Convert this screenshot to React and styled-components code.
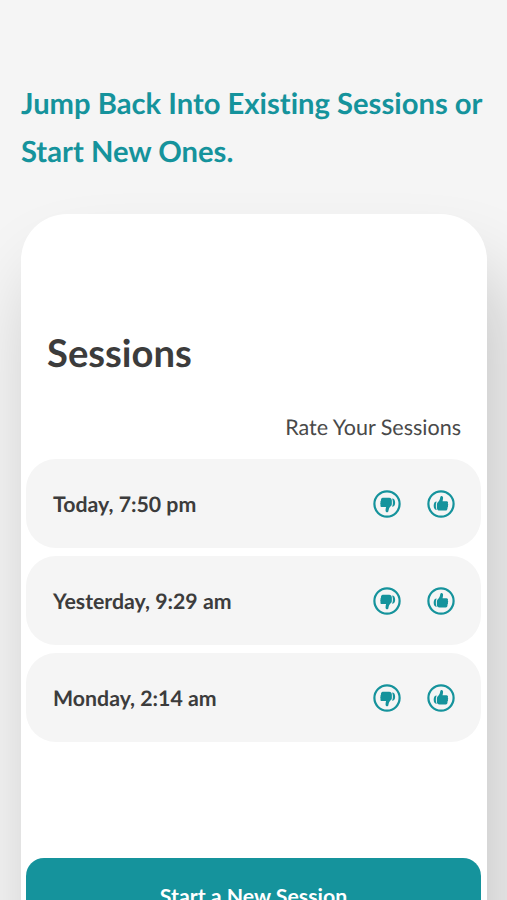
import React from "react";
import styled, { createGlobalStyle } from "styled-components";

const sessions = ["Today, 7:50 pm", "Yesterday, 9:29 am", "Monday, 2:14 am"];

const ThumbIcon = ({ down }) => (
  <svg width="28" height="28" viewBox="0 0 28 28" aria-hidden="true">
    <circle cx="14" cy="14" r="12.6" fill="none" stroke="#15939c" strokeWidth="2.2" />
    {down ? (
      <path
        transform="translate(-.2 -.7) scale(1.03 1.13)"
        d="M9.7 7.400h6.200c1.600 0 2.600 1 2.600 2.500v2.800c0 1.200-.6 1.900-1.400 2.600-1.200 1-1.600 2.400-2 4.100-.3 1.500-2.500 1.300-2.700-.5-.1-1.100.2-2.200.5-3.200H9c-1.400 0-2-1-1.400-1.900-.5-.6-.5-1.300-.1-1.900-.3-.7-.1-1.300.4-1.800-.1-1.500.5-2.700 1.800-2.700zM18.700 8.100c1.900 0 3 1.400 3 3.700s-1.100 3.600-3.100 3.700c.6-1 .9-2 .9-3.600s-.2-2.700-.8-3.800z"
        fill="#15939c"
      />
    ) : (
      <path
        transform="translate(-.4 -2.1) scale(1.01 1.13)"
        d="M18.900 20.100h-6.100c-1.600 0-2.600-1-2.600-2.500v-2.800c0-1.200.6-1.900 1.400-2.600 1.200-1 1.600-2.300 2-4.100.3-1.500 2.500-1.300 2.700.5.1 1.100-.2 2.200-.5 3.200h3.800c1.400 0 2 1 1.400 1.900.5.600.5 1.300.1 1.900.3.700.1 1.300-.4 1.800.1 1.500-.5 2.700-1.800 2.700zM10 12.100c-1.900 0-3 1.400-3 3.700s1.100 3.600 3.100 3.700c-.6-1-.9-2-.9-3.600s.2-2.700.8-3.800z"
        fill="#15939c"
      />
    )}
  </svg>
);

export default () => (
  <>
    <GlobalStyle />
    <Page>
      <Headline>Jump Back Into Existing Sessions or Start New Ones.</Headline>
      <Card>
        <Title>Sessions</Title>
        <RateLabel>Rate Your Sessions</RateLabel>
        <SessionList>
          {sessions.map(session => (
            <SessionRow key={session}>
              <SessionTime>{session}</SessionTime>
              <RateButton aria-label="Thumbs down">
                <ThumbIcon down />
              </RateButton>
              <RateButton aria-label="Thumbs up">
                <ThumbIcon />
              </RateButton>
            </SessionRow>
          ))}
        </SessionList>
        <StartButton>Start a New Session</StartButton>
      </Card>
    </Page>
  </>
);

const GlobalStyle = createGlobalStyle`
  * {
    box-sizing: border-box;
  }

  body {
    margin: 0;
    background: #f5f5f5;
    font-family: Lato, sans-serif;
    font-variant-ligatures: none;
    text-rendering: geometricPrecision;
  }
`;

const Page = styled.main`
  height: 900px;
  padding: 80px 20px 0 21px;
  overflow: hidden;
`;

const Headline = styled.h1`
  width: 480px;
  margin: 0 0 38px;
  color: #15939c;
  font-size: 29.2px;
  font-weight: 700;
  line-height: 48px;
`;

const Card = styled.section`
  display: flex;
  flex-direction: column;
  height: 960px;
  padding: 114px 6px 0 5px;
  border-radius: 46px;
  background: #fff;
  box-shadow: 13px 56px 80px rgba(0, 0, 0, 0.2);
`;

const Title = styled.h2`
  margin: 0 0 0 21px;
  color: #3c3c3c;
  font-size: 38.2px;
  font-weight: 700;
  line-height: 51px;
`;

const RateLabel = styled.p`
  margin: 32px 20px 0 0;
  color: #494949;
  font-size: 21.5px;
  line-height: 32px;
  text-align: right;
`;

const SessionList = styled.div`
  display: flex;
  flex-direction: column;
  gap: 8px;
  margin-top: 16px;
`;

const SessionRow = styled.div`
  display: flex;
  align-items: center;
  gap: 26px;
  height: 89px;
  padding: 0 26px 0 27px;
  border-radius: 30px;
  background: #f5f5f5;
`;

const SessionTime = styled.span`
  flex: 1;
  color: #3c3c3c;
  font-size: 21.300px;
  font-weight: 700;
  line-height: 28px;
`;

const RateButton = styled.button`
  display: flex;
  padding: 0;
  border: 0;
  background: none;
`;

const StartButton = styled.button`
  height: 75px;
  margin-top: 116px;
  border: 0;
  border-radius: 18px;
  background: #15939c;
  color: #fff;
  font-family: inherit;
  font-size: 21.3px;
  font-weight: 700;
`;
